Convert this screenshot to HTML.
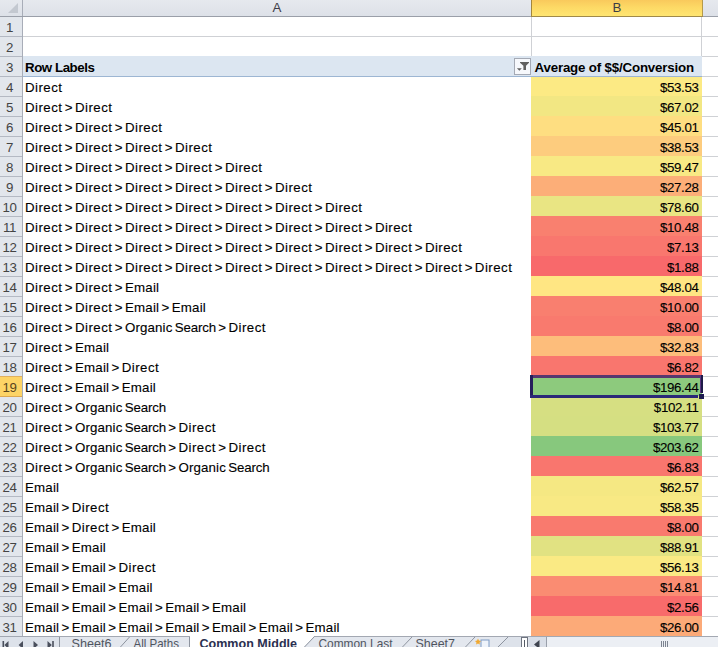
<!DOCTYPE html>
<html><head><meta charset="utf-8"><title>Sheet</title>
<style>
html,body{margin:0;padding:0;}
body{width:718px;height:647px;overflow:hidden;background:#fff;position:relative;font-family:"Liberation Sans",sans-serif;}
#hdr{position:absolute;left:0;top:0;width:718px;height:16px;background:linear-gradient(#e6e9ee,#dde1e8);border-bottom:1px solid #9a9fa9;}
#corner{position:absolute;left:0;top:0;width:22px;height:16px;border-right:1px solid #a8adb8;}
#corner:after{content:"";position:absolute;right:4px;bottom:3px;border-style:solid;border-width:0 0 10px 10px;border-color:transparent transparent #c3c8d0 transparent;}
.ch{position:absolute;top:0;height:16px;line-height:15px;font-size:13.3px;color:#3c3c46;text-align:center;}
#cha{left:23px;width:508px;}
#chb{left:531px;width:170px;background:linear-gradient(#f9c95c,#fdd965 45%,#ffe672);border-left:1px solid #a3863c;border-right:1px solid #b59a4a;box-shadow:0 1px 0 #a08a4a;}
#rh{position:absolute;left:0;top:17px;width:22px;height:620px;background:#e2e6ec;border-right:1px solid #a8adb8;}
.rn{position:absolute;left:0;width:19px;padding-right:3px;height:18px;padding-top:1px;letter-spacing:-0.3px;line-height:20px;font-size:13.3px;color:#444;text-align:center;border-bottom:1px solid #b4b9c3;}
.rn.sel{background:#fdd466;border-bottom-color:#dca850;border-top:1px solid #e0b060;margin-top:-1px;color:#5a461e;}
.row{position:absolute;left:23px;width:695px;height:20px;}
.a,.b,.c{-webkit-text-stroke:0.12px #000;position:absolute;top:0;height:18px;padding-top:1px;line-height:20px;overflow:hidden;font-size:13.3px;color:#000;white-space:nowrap;border-bottom:1px solid #cfd1d5;}
.a{left:0;width:508px;border-right:1px solid #cfd1d5;text-indent:2px;word-spacing:-1.33px;}
.b{left:508px;width:171px;text-align:right;letter-spacing:-0.35px;}
.b span{margin-right:3.5px;}
.c{left:678px;width:16px;border-left:1px solid #cfd1d5;}
.wd{letter-spacing:0.46px;}.we{letter-spacing:0.2px;}.wo{letter-spacing:0.13px;}.ws{letter-spacing:-0.16px;}
.h .a,.h .b{-webkit-text-stroke:0;background:#dce6f1;border-bottom-color:#9db6d3;font-weight:bold;}
.h .a{letter-spacing:-0.45px;word-spacing:0;}
.h .b{text-align:left;text-indent:3.5px;letter-spacing:-0.17px;}
#hb3{position:absolute;left:23px;top:56px;width:679px;height:1px;background:#dce6f1;}
#sel i{position:absolute;display:block;background:#261f5c;}
#sel .t{left:530px;top:375px;width:173px;height:3px;background:#57376f;}
#sel .l{left:530px;top:375px;width:3px;height:23px;}
#sel .r{left:700px;top:375px;width:3px;height:18px;background:linear-gradient(90deg,#5a3582 0,#5a3582 1px,#1e1a48 1px);}
#sel .bt{left:530px;top:395px;width:168px;height:3px;background:#2a2878;}
#sel .fh{left:699px;top:394px;width:5px;height:5px;background:#1e1c50;}
.d .a{border-color:transparent;}
.d .b{top:-1px;padding-top:2px;}
#hb3b{position:absolute;left:23px;top:76px;width:679px;height:1px;background:#9db6d3;}
.h .a{border-right-color:#dce6f1;}
</style></head><body>
<div id="hdr"><div id="corner"></div>
<div class="ch" id="cha">A</div>
<div class="ch" id="chb">B</div>
</div>
<div id="rh">
<div class="rn" style="top:0px">1</div>
<div class="rn" style="top:20px">2</div>
<div class="rn" style="top:40px">3</div>
<div class="rn" style="top:60px">4</div>
<div class="rn" style="top:80px">5</div>
<div class="rn" style="top:100px">6</div>
<div class="rn" style="top:120px">7</div>
<div class="rn" style="top:140px">8</div>
<div class="rn" style="top:160px">9</div>
<div class="rn" style="top:180px">10</div>
<div class="rn" style="top:200px">11</div>
<div class="rn" style="top:220px">12</div>
<div class="rn" style="top:240px">13</div>
<div class="rn" style="top:260px">14</div>
<div class="rn" style="top:280px">15</div>
<div class="rn" style="top:300px">16</div>
<div class="rn" style="top:320px">17</div>
<div class="rn" style="top:340px">18</div>
<div class="rn sel" style="top:360px">19</div>
<div class="rn" style="top:380px">20</div>
<div class="rn" style="top:400px">21</div>
<div class="rn" style="top:420px">22</div>
<div class="rn" style="top:440px">23</div>
<div class="rn" style="top:460px">24</div>
<div class="rn" style="top:480px">25</div>
<div class="rn" style="top:500px">26</div>
<div class="rn" style="top:520px">27</div>
<div class="rn" style="top:540px">28</div>
<div class="rn" style="top:560px">29</div>
<div class="rn" style="top:580px">30</div>
<div class="rn" style="top:600px">31</div>
</div>
<div class="row" style="top:17px"><div class="a"></div><div class="b"><span></span></div><div class="c"></div></div>
<div class="row" style="top:37px"><div class="a"></div><div class="b"><span></span></div><div class="c"></div></div>
<div class="row h" style="top:57px"><div class="a">Row Labels</div><div class="b"><span>Average of $$/Conversion</span></div><div class="c" style="border-left-color:transparent"></div></div>
<div class="row d" style="top:77px"><div class="a"><span class="wd">Direct</span></div><div class="b" style="background:#FCEA84;border-color:#FCEA84"><span>$53.53</span></div><div class="c" style="border-left-color:transparent"></div></div>
<div class="row d" style="top:97px"><div class="a"><span class="wd">Direct</span> &gt; <span class="wd">Direct</span></div><div class="b" style="background:#F2E783;border-color:#F2E783"><span>$67.02</span></div><div class="c" style="border-left-color:transparent"></div></div>
<div class="row d" style="top:117px"><div class="a"><span class="wd">Direct</span> &gt; <span class="wd">Direct</span> &gt; <span class="wd">Direct</span></div><div class="b" style="background:#FEDE81;border-color:#FEDE81"><span>$45.01</span></div><div class="c" style="border-left-color:transparent"></div></div>
<div class="row d" style="top:137px"><div class="a"><span class="wd">Direct</span> &gt; <span class="wd">Direct</span> &gt; <span class="wd">Direct</span> &gt; <span class="wd">Direct</span></div><div class="b" style="background:#FDCC7E;border-color:#FDCC7E"><span>$38.53</span></div><div class="c" style="border-left-color:transparent"></div></div>
<div class="row d" style="top:157px"><div class="a"><span class="wd">Direct</span> &gt; <span class="wd">Direct</span> &gt; <span class="wd">Direct</span> &gt; <span class="wd">Direct</span> &gt; <span class="wd">Direct</span></div><div class="b" style="background:#F8E984;border-color:#F8E984"><span>$59.47</span></div><div class="c" style="border-left-color:transparent"></div></div>
<div class="row d" style="top:177px"><div class="a"><span class="wd">Direct</span> &gt; <span class="wd">Direct</span> &gt; <span class="wd">Direct</span> &gt; <span class="wd">Direct</span> &gt; <span class="wd">Direct</span> &gt; <span class="wd">Direct</span></div><div class="b" style="background:#FCAE78;border-color:#FCAE78"><span>$27.28</span></div><div class="c" style="border-left-color:transparent"></div></div>
<div class="row d" style="top:197px"><div class="a"><span class="wd">Direct</span> &gt; <span class="wd">Direct</span> &gt; <span class="wd">Direct</span> &gt; <span class="wd">Direct</span> &gt; <span class="wd">Direct</span> &gt; <span class="wd">Direct</span> &gt; <span class="wd">Direct</span></div><div class="b" style="background:#E9E583;border-color:#E9E583"><span>$78.60</span></div><div class="c" style="border-left-color:transparent"></div></div>
<div class="row d" style="top:217px"><div class="a"><span class="wd">Direct</span> &gt; <span class="wd">Direct</span> &gt; <span class="wd">Direct</span> &gt; <span class="wd">Direct</span> &gt; <span class="wd">Direct</span> &gt; <span class="wd">Direct</span> &gt; <span class="wd">Direct</span> &gt; <span class="wd">Direct</span></div><div class="b" style="background:#F9806F;border-color:#F9806F"><span>$10.48</span></div><div class="c" style="border-left-color:transparent"></div></div>
<div class="row d" style="top:237px"><div class="a"><span class="wd">Direct</span> &gt; <span class="wd">Direct</span> &gt; <span class="wd">Direct</span> &gt; <span class="wd">Direct</span> &gt; <span class="wd">Direct</span> &gt; <span class="wd">Direct</span> &gt; <span class="wd">Direct</span> &gt; <span class="wd">Direct</span> &gt; <span class="wd">Direct</span></div><div class="b" style="background:#F9776E;border-color:#F9776E"><span>$7.13</span></div><div class="c" style="border-left-color:transparent"></div></div>
<div class="row d" style="top:257px"><div class="a"><span class="wd">Direct</span> &gt; <span class="wd">Direct</span> &gt; <span class="wd">Direct</span> &gt; <span class="wd">Direct</span> &gt; <span class="wd">Direct</span> &gt; <span class="wd">Direct</span> &gt; <span class="wd">Direct</span> &gt; <span class="wd">Direct</span> &gt; <span class="wd">Direct</span> &gt; <span class="wd">Direct</span></div><div class="b" style="background:#F8696B;border-color:#F8696B"><span>$1.88</span></div><div class="c" style="border-left-color:transparent"></div></div>
<div class="row d" style="top:277px"><div class="a"><span class="wd">Direct</span> &gt; <span class="wd">Direct</span> &gt; <span class="we">Email</span></div><div class="b" style="background:#FFE683;border-color:#FFE683"><span>$48.04</span></div><div class="c" style="border-left-color:transparent"></div></div>
<div class="row d" style="top:297px"><div class="a"><span class="wd">Direct</span> &gt; <span class="wd">Direct</span> &gt; <span class="we">Email</span> &gt; <span class="we">Email</span></div><div class="b" style="background:#F97F6F;border-color:#F97F6F"><span>$10.00</span></div><div class="c" style="border-left-color:transparent"></div></div>
<div class="row d" style="top:317px"><div class="a"><span class="wd">Direct</span> &gt; <span class="wd">Direct</span> &gt; <span class="wo">Organic</span> <span class="ws">Search</span> &gt; <span class="wd">Direct</span></div><div class="b" style="background:#F97A6E;border-color:#F97A6E"><span>$8.00</span></div><div class="c" style="border-left-color:transparent"></div></div>
<div class="row d" style="top:337px"><div class="a"><span class="wd">Direct</span> &gt; <span class="we">Email</span></div><div class="b" style="background:#FDBD7B;border-color:#FDBD7B"><span>$32.83</span></div><div class="c" style="border-left-color:transparent"></div></div>
<div class="row d" style="top:357px"><div class="a"><span class="wd">Direct</span> &gt; <span class="we">Email</span> &gt; <span class="wd">Direct</span></div><div class="b" style="background:#F9766E;border-color:#F9766E"><span>$6.82</span></div><div class="c" style="border-left-color:transparent"></div></div>
<div class="row d" style="top:377px"><div class="a"><span class="wd">Direct</span> &gt; <span class="we">Email</span> &gt; <span class="we">Email</span></div><div class="b" style="background:#8DCA7D;border-color:#8DCA7D"><span>$196.44</span></div><div class="c" style="border-left-color:transparent"></div></div>
<div class="row d" style="top:397px"><div class="a"><span class="wd">Direct</span> &gt; <span class="wo">Organic</span> <span class="ws">Search</span></div><div class="b" style="background:#D6DF82;border-color:#D6DF82"><span>$102.11</span></div><div class="c" style="border-left-color:transparent"></div></div>
<div class="row d" style="top:417px"><div class="a"><span class="wd">Direct</span> &gt; <span class="wo">Organic</span> <span class="ws">Search</span> &gt; <span class="wd">Direct</span></div><div class="b" style="background:#D5DF82;border-color:#D5DF82"><span>$103.77</span></div><div class="c" style="border-left-color:transparent"></div></div>
<div class="row d" style="top:437px"><div class="a"><span class="wd">Direct</span> &gt; <span class="wo">Organic</span> <span class="ws">Search</span> &gt; <span class="wd">Direct</span> &gt; <span class="wd">Direct</span></div><div class="b" style="background:#87C87D;border-color:#87C87D"><span>$203.62</span></div><div class="c" style="border-left-color:transparent"></div></div>
<div class="row d" style="top:457px"><div class="a"><span class="wd">Direct</span> &gt; <span class="wo">Organic</span> <span class="ws">Search</span> &gt; <span class="wo">Organic</span> <span class="ws">Search</span></div><div class="b" style="background:#F9766E;border-color:#F9766E"><span>$6.83</span></div><div class="c" style="border-left-color:transparent"></div></div>
<div class="row d" style="top:477px"><div class="a"><span class="we">Email</span></div><div class="b" style="background:#F5E883;border-color:#F5E883"><span>$62.57</span></div><div class="c" style="border-left-color:transparent"></div></div>
<div class="row d" style="top:497px"><div class="a"><span class="we">Email</span> &gt; <span class="wd">Direct</span></div><div class="b" style="background:#F8E984;border-color:#F8E984"><span>$58.35</span></div><div class="c" style="border-left-color:transparent"></div></div>
<div class="row d" style="top:517px"><div class="a"><span class="we">Email</span> &gt; <span class="wd">Direct</span> &gt; <span class="we">Email</span></div><div class="b" style="background:#F97A6E;border-color:#F97A6E"><span>$8.00</span></div><div class="c" style="border-left-color:transparent"></div></div>
<div class="row d" style="top:537px"><div class="a"><span class="we">Email</span> &gt; <span class="we">Email</span></div><div class="b" style="background:#E1E282;border-color:#E1E282"><span>$88.91</span></div><div class="c" style="border-left-color:transparent"></div></div>
<div class="row d" style="top:557px"><div class="a"><span class="we">Email</span> &gt; <span class="we">Email</span> &gt; <span class="wd">Direct</span></div><div class="b" style="background:#FAEA84;border-color:#FAEA84"><span>$56.13</span></div><div class="c" style="border-left-color:transparent"></div></div>
<div class="row d" style="top:577px"><div class="a"><span class="we">Email</span> &gt; <span class="we">Email</span> &gt; <span class="we">Email</span></div><div class="b" style="background:#FA8C72;border-color:#FA8C72"><span>$14.81</span></div><div class="c" style="border-left-color:transparent"></div></div>
<div class="row d" style="top:597px"><div class="a"><span class="we">Email</span> &gt; <span class="we">Email</span> &gt; <span class="we">Email</span> &gt; <span class="we">Email</span> &gt; <span class="we">Email</span></div><div class="b" style="background:#F86B6B;border-color:#F86B6B"><span>$2.56</span></div><div class="c" style="border-left-color:transparent"></div></div>
<div class="row d" style="top:617px"><div class="a"><span class="we">Email</span> &gt; <span class="we">Email</span> &gt; <span class="we">Email</span> &gt; <span class="we">Email</span> &gt; <span class="we">Email</span> &gt; <span class="we">Email</span> &gt; <span class="we">Email</span></div><div class="b" style="background:#FCAA78;border-color:#FCAA78"><span>$26.00</span></div><div class="c" style="border-left-color:transparent"></div></div>
<svg id="tabs" width="718" height="11" viewBox="0 636 718 11" style="position:absolute;left:0;top:636px;font-family:'Liberation Sans',sans-serif;font-size:13.3px">
<rect x="0" y="636" width="718" height="11" fill="#dde2ea"/>
<rect x="60" y="637" width="448" height="10" fill="#e3e7ee"/>
<polygon points="508,637 530,637 530,647 497,647" fill="#dde2ea"/>
<rect x="0" y="636" width="718" height="1" fill="#a3a8b2"/>
<polygon points="190,636 314.5,636 304,647 190,647" fill="#ffffff"/>
<g fill="#4a4f5c">
<rect x="2.5" y="641" width="1.6" height="6"/><polygon points="8.5,641 8.5,649 4.4,645"/>
<polygon points="23,641 23,649 18.6,645"/>
<polygon points="33.5,641 33.5,649 38,645"/>
<polygon points="47.5,641 47.5,649 51.8,645"/><rect x="52.2" y="641" width="1.6" height="6"/>
</g>
<g stroke="#8e949f" stroke-width="1" fill="none">
<line x1="59.5" y1="637" x2="59.5" y2="647"/>
<line x1="129.5" y1="637" x2="120" y2="647.5"/>
<line x1="189.5" y1="637" x2="189.5" y2="647"/>
<line x1="314.5" y1="636.5" x2="304" y2="647.5"/>
<line x1="412" y1="637" x2="402" y2="647.5"/>
<line x1="475" y1="637" x2="465" y2="647.5"/>
<line x1="508" y1="637" x2="497.5" y2="647.5"/>
</g>
<g fill="#50555f">
<text x="71.5" y="647.6" textLength="40" lengthAdjust="spacingAndGlyphs">Sheet6</text>
<text x="133.5" y="647.6" textLength="45.5" lengthAdjust="spacingAndGlyphs">All Paths</text>
<text x="318.5" y="647.6" textLength="74" lengthAdjust="spacingAndGlyphs">Common Last</text>
<text x="415.5" y="647.6" textLength="39.5" lengthAdjust="spacingAndGlyphs">Sheet7</text>
</g>
<text x="199.5" y="647.6" textLength="97.5" lengthAdjust="spacingAndGlyphs" font-weight="bold" fill="#2b3050">Common Middle</text>
<rect x="481" y="640" width="8" height="8" fill="#eef3fa" stroke="#7f9bc4" stroke-width="1"/>
<polygon points="478,638.6 478.9,640.6 481,640.9 479.5,642.4 479.9,644.6 478,643.5 476.1,644.6 476.5,642.4 475,640.9 477.1,640.6" fill="#f0a830"/>
<rect x="521.5" y="637.5" width="6" height="11" fill="#ffffff" stroke="#6e7480" stroke-width="1"/>
<rect x="524" y="640" width="1" height="7" fill="#555b66"/>
<rect x="529" y="637" width="17" height="10" fill="#d9dee7"/>
<polygon points="539.5,640 539.5,649 534,644.5" fill="#3f444f"/>
<rect x="546" y="637" width="172" height="10" fill="#eceff4"/>
<line x1="546.5" y1="637" x2="546.5" y2="647" stroke="#9aa0ab"/>
<g fill="#7d8490"><rect x="661" y="641" width="1" height="6"/><rect x="663" y="641" width="1" height="6"/><rect x="665" y="641" width="1" height="6"/><rect x="667" y="641" width="1" height="6"/></g>
</svg>
<div id="hb3"></div><div id="hb3b"></div>
<svg id="flt" width="17" height="17" viewBox="0 0 17 17" style="position:absolute;left:514px;top:58px">
<rect x="0.5" y="0.5" width="16" height="16" fill="#f6f8fc" stroke="#a4a9b4"/>
<polygon points="6,4 15,4 15,4.8 12,7.8 12,12 9.4,12 9.4,7.8 6,4.8" fill="#606060"/>
<polygon points="2.9,10.2 7.8,10.2 5.4,12.8" fill="#606060"/>
</svg>
<div id="sel"><i class="t"></i><i class="l"></i><i class="r"></i><i class="bt"></i><i class="fh"></i></div>
</body></html>
